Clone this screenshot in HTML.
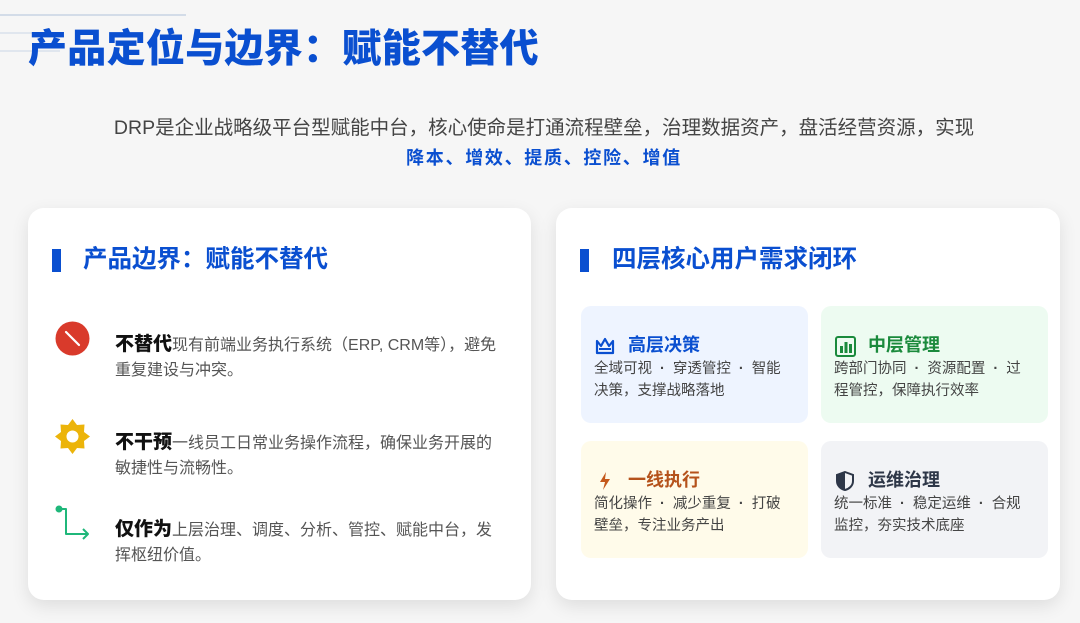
<!DOCTYPE html>
<html><head><meta charset="utf-8"><style>
*{margin:0;padding:0;box-sizing:border-box}
body{width:1080px;height:623px;overflow:hidden;background:#f6f6f6;font-family:"Liberation Sans","Noto Sans CJK SC",sans-serif;position:relative}
.ln{position:absolute;left:0;height:2px;background:#d3dce8}
h1{position:absolute;left:28px;top:26px;font-size:39px;font-weight:900;color:#0a4fd0;line-height:48px;letter-spacing:0.3px}
.sub{position:absolute;left:0;width:1088px;text-align:center;top:115px;font-size:19.5px;color:#444;line-height:26px}
.sub2{position:absolute;left:0;width:1088px;text-align:center;top:145px;font-size:18px;color:#0a4fd0;font-weight:700;line-height:26px;letter-spacing:1.7px}
.card{position:absolute;top:208px;height:392px;background:#fff;border-radius:16px;box-shadow:0 6px 18px rgba(0,0,0,.10)}
.hd{position:absolute;top:245px;font-size:24.5px;font-weight:700;color:#0a4fd0;line-height:30px}
.bar{position:absolute;top:249px;width:9px;height:23px;background:#0a4fd0}
.it{position:absolute;left:115px;width:384px;font-size:16px;line-height:25px;color:#555}
.it b{font-size:19px;color:#111;font-weight:900}
.ic{position:absolute}
.bx{position:absolute;width:227px;height:117px;border-radius:10px}
.bx .t{position:absolute;left:47px;top:27px;font-size:18px;font-weight:700;line-height:24px}
.bx .d{position:absolute;left:13px;top:52px;width:192px;font-size:14.5px;line-height:22px;color:#444}
.bx .d i{font-style:normal;margin:0 8px;font-weight:700}
.bx svg{position:absolute;left:14px;top:30px}
</style></head><body>
<div class="ln" style="top:14px;width:186px"></div>
<div class="ln" style="top:32px;width:60px;background:#e0e6ee"></div>
<div class="ln" style="top:50px;width:60px;background:#e0e6ee"></div>
<h1>产品定位与边界：赋能不替代</h1>
<div class="sub">DRP是企业战略级平台型赋能中台，核心使命是打通流程壁垒，治理数据资产，盘活经营资源，实现</div>
<div class="sub2">降本、增效、提质、控险、增值</div>

<div class="card" style="left:28px;width:503px"></div>
<div class="bar" style="left:52px"></div>
<div class="hd" style="left:83px">产品边界：赋能不替代</div>

<svg class="ic" style="left:55px;top:321px" width="35" height="35" viewBox="0 0 35 35"><circle cx="17.5" cy="17.5" r="17" fill="#d93a2b"/><line x1="11" y1="11" x2="24" y2="24" stroke="#fff" stroke-width="2.2" stroke-linecap="round"/></svg>
<div class="it" style="top:332px"><b>不替代</b>现有前端业务执行系统（ERP, CRM等），避免重复建设与冲突。</div>

<svg class="ic" style="left:55px;top:419px" width="35" height="35" viewBox="0 0 35 35"><polygon fill="#ecb40a" points="17.5,0 22,6 29.5,5.5 29,13 35,17.5 29,22 29.5,29.5 22,29 17.5,35 13,29 5.5,29.5 6,22 0,17.5 6,13 5.5,5.5 13,6"/><circle cx="17.5" cy="17.5" r="6" fill="#fff"/></svg>
<div class="it" style="top:430px"><b>不干预</b>一线员工日常业务操作流程，确保业务开展的敏捷性与流畅性。</div>

<svg class="ic" style="left:54px;top:504px" width="36" height="36" viewBox="0 0 36 36"><circle cx="5" cy="5" r="3.5" fill="#1fb77a"/><path d="M5 5 H12 V30 H34 M29 25 L34 30 L29 35" fill="none" stroke="#1fb77a" stroke-width="2" stroke-linejoin="round"/></svg>
<div class="it" style="top:517px"><b>仅作为</b>上层治理、调度、分析、管控、赋能中台，发挥枢纽价值。</div>

<div class="card" style="left:556px;width:504px"></div>
<div class="bar" style="left:580px"></div>
<div class="hd" style="left:612px">四层核心用户需求闭环</div>

<div class="bx" style="left:581px;top:306px;background:#eef4ff">
<svg width="20" height="20" viewBox="0 0 20 20"><path d="M2 5 L6 10 L10 3 L14 10 L18 5 V17 H2 Z" fill="none" stroke="#0a4fd0" stroke-width="2.2" stroke-linejoin="round"/><line x1="4" y1="13" x2="16" y2="13" stroke="#0a4fd0" stroke-width="2"/></svg>
<div class="t" style="color:#0a4fd0">高层决策</div><div class="d">全域可视<i>·</i>穿透管控<i>·</i>智能决策，支撑战略落地</div></div>

<div class="bx" style="left:821px;top:306px;background:#edfbf1">
<svg width="21" height="21" viewBox="0 0 21 21"><rect x="1" y="1" width="19" height="19" rx="2" fill="none" stroke="#1a8a3c" stroke-width="2"/><rect x="5" y="10" width="3" height="7" fill="#1a8a3c"/><rect x="9.5" y="6" width="3" height="11" fill="#1a8a3c"/><rect x="14" y="8" width="3" height="9" fill="#1a8a3c"/></svg>
<div class="t" style="color:#1a8a3c">中层管理</div><div class="d">跨部门协同<i>·</i>资源配置<i>·</i>过程管控，保障执行效率</div></div>

<div class="bx" style="left:581px;top:441px;background:#fffbea">
<svg width="20" height="20" viewBox="0 0 20 20"><path d="M11 1 L5 11 H10 L8 19 L15 8 H10 Z" fill="#c4581b"/></svg>
<div class="t" style="color:#b5521b">一线执行</div><div class="d">简化操作<i>·</i>减少重复<i>·</i>打破壁垒，专注业务产出</div></div>

<div class="bx" style="left:821px;top:441px;background:#f2f3f6">
<svg width="20" height="20" viewBox="0 0 20 20"><path d="M10 1 L18 4 V10 C18 15 14 18 10 19 C6 18 2 15 2 10 V4 Z" fill="none" stroke="#2e3748" stroke-width="2"/><path d="M10 1 V19 C6 18 2 15 2 10 V4 Z" fill="#2e3748"/></svg>
<div class="t" style="color:#2e3748">运维治理</div><div class="d">统一标准<i>·</i>稳定运维<i>·</i>合规监控，夯实技术底座</div></div>
</body></html>
